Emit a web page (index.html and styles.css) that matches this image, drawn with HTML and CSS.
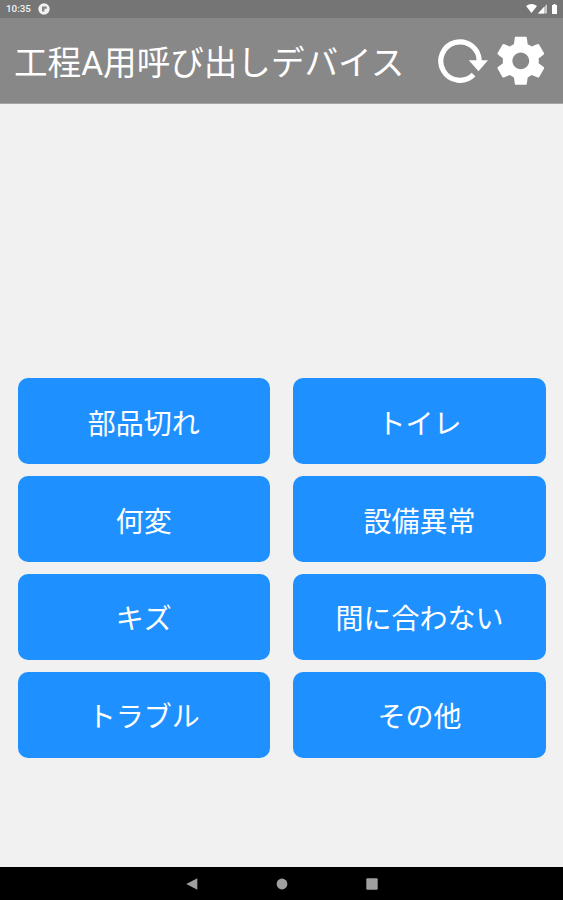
FILE: index.html
```html
<!DOCTYPE html>
<html lang="ja">
<head>
<meta charset="UTF-8">
<meta name="viewport" content="width=device-width, initial-scale=1.0">
<title>工程A用呼び出しデバイス</title>
<link rel="stylesheet" href="styles.css">
</head>
<body>

<div class="status-bar">
    <span class="clock">10:35</span>
    <svg class="app-icon" viewBox="0 0 12 12">
        <circle cx="6" cy="6" r="5.7" fill="#f2f2f2"/>
        <path d="M4 3.6h4.8v2.2H6.4v2.6H4z" fill="#858585"/>
    </svg>
    <svg class="status-icons" viewBox="0 0 32 10">
        <path d="M0 2Q5.5-2 11 2L5.5 9z" fill="#fff"/>
        <path d="M21 0v9.5h-9z" fill="#c8c8c8"/>
        <path d="M18 3v6.5h-6z" fill="#fff"/>
        <path d="M26 1h1.5V0h2v1H31v9h-5z" fill="#fff"/>
    </svg>
</div>

<header class="header">
    <h1>工程A用呼び出しデバイス</h1>
    <button class="icon-button" type="button" aria-label="更新">
        <svg class="refresh-icon" viewBox="0 0 50 44">
            <path d="M35.6 35.6A19.2 19.2 0 1 1 41.2 22" fill="none" stroke="#fff" stroke-width="5.2"/>
            <path d="M30.8 21.3H50L40.5 32.2z" fill="#fff"/>
        </svg>
    </button>
    <button class="icon-button" type="button" aria-label="設定">
        <svg class="settings-icon" viewBox="0 0 24 24">
            <path fill="#fff" d="M19.43 12.98c.04-.32.07-.64.07-.98s-.03-.66-.07-.98l2.11-1.65c.19-.15.24-.42.12-.64l-2-3.46c-.12-.22-.39-.3-.61-.22l-2.49 1c-.52-.4-1.08-.73-1.69-.98l-.38-2.65C14.46 2.18 14.25 2 14 2h-4c-.25 0-.46.18-.49.42l-.38 2.65c-.61.25-1.17.59-1.69.98l-2.49-1c-.23-.09-.49 0-.61.22l-2 3.46c-.13.22-.07.49.12.64l2.11 1.65c-.04.32-.07.65-.07.98s.03.66.07.98l-2.11 1.65c-.19.15-.24.42-.12.64l2 3.46c.12.22.39.3.61.22l2.49-1c.52.4 1.08.73 1.69.98l.38 2.65c.03.24.24.42.49.42h4c.25 0 .46-.18.49-.42l.38-2.65c.61-.25 1.17-.59 1.69-.98l2.49 1c.23.09.49 0 .61-.22l2-3.46c.12-.22.07-.49-.12-.64l-2.11-1.65zM12 15.5c-1.93 0-3.5-1.57-3.5-3.5s1.57-3.5 3.5-3.5 3.5 1.57 3.5 3.5-1.57 3.5-3.5 3.5z"/>
        </svg>
    </button>
</header>

<main class="content">
    <div class="call-grid">
        <button class="call-button" type="button">部品切れ</button>
        <button class="call-button" type="button">トイレ</button>
        <button class="call-button" type="button">何変</button>
        <button class="call-button" type="button">設備異常</button>
        <button class="call-button" type="button">キズ</button>
        <button class="call-button" type="button">間に合わない</button>
        <button class="call-button" type="button">トラブル</button>
        <button class="call-button" type="button">その他</button>
    </div>
</main>

<nav class="nav-bar">
    <svg viewBox="0 0 12 12"><path d="M.3 6L11.3.2v11.6z"/></svg>
    <svg viewBox="0 0 12 12"><circle cx="6" cy="6" r="5.4"/></svg>
    <svg viewBox="0 0 12 12"><rect x=".3" y=".3" width="11.4" height="11.4" rx="1"/></svg>
</nav>

</body>
</html>
```
FILE: styles.css
```css
* {
  box-sizing: border-box;
}

body {
  margin: 0;
  height: 900px;
  display: flex;
  flex-direction: column;
  font-family: Roboto, "Noto Sans CJK JP", sans-serif;
  background-color: #f1f1f1;
  overflow: hidden;
}

button {
  padding: 0;
  border: none;
  cursor: pointer;
}

.status-bar {
  height: 18px;
  display: flex;
  align-items: center;
  padding: 0 5px 0 6px;
  background-color: #757575;
}

.clock {
  font-size: 9.8px;
  font-weight: 500;
  line-height: 18px;
  width: 32px;
  color: #f2f2f2;
}

.app-icon {
  width: 12px;
  height: 12px;
}

.status-icons {
  width: 32px;
  height: 10px;
  margin-left: auto;
}

.header {
  height: 86px;
  display: flex;
  align-items: center;
  padding: 0 13px 0 14px;
  background-color: #888;
  border-bottom: 1px solid #a5a5a5;
}

h1 {
  flex: 1;
  margin: 0;
  padding-top: 7px;
  font-size: 33.6px;
  font-weight: 400;
  line-height: 50px;
  white-space: nowrap;
  color: #fff;
}

.icon-button {
  display: flex;
  background: none;
}

.refresh-icon {
  width: 50px;
  height: 44px;
  margin-right: 4px;
}

.settings-icon {
  width: 57.6px;
  height: 57.6px;
}

.content {
  flex: 1;
  padding: 274.3px 17px 0 17.5px;
}

.call-grid {
  display: grid;
  grid-template-columns: 1fr 1fr;
  gap: 11.6px 23px;
}

.call-button {
  height: 86.2px;
  padding-top: 1px;
  border-radius: 10px;
  background-color: #1e90ff;
  color: #fff;
  font-family: inherit;
  font-size: 28px;
}

.nav-bar {
  height: 33px;
  display: flex;
  justify-content: center;
  align-items: center;
  gap: 78px;
  background-color: #000;
}

.nav-bar svg {
  width: 12px;
  height: 12px;
  fill: #a0a0a0;
}
```
